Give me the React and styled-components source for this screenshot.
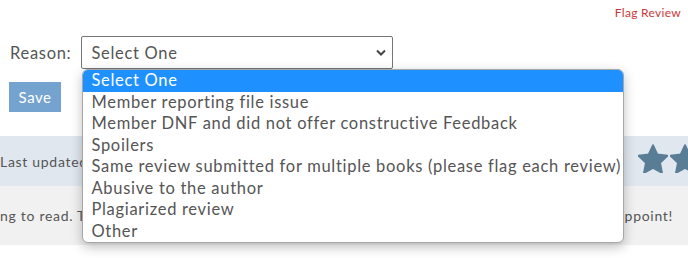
import React from "react";
import styled, { createGlobalStyle } from "styled-components";

const Global = createGlobalStyle`
  html, body { margin: 0; padding: 0; background: #fff; }
  body { font-family: "Lato", "Open Sans", sans-serif; color: #555; overflow: hidden; letter-spacing: 0.7px; }
`;

const Page = styled.div`
  width: 688px;
  height: 258px;
  position: relative;
  overflow: hidden;
`;

const FlagRow = styled.div`
  display: flex;
  justify-content: flex-end;
  padding: 5px 7px 0 0;
  height: 15px;
`;

const FlagLink = styled.a`
  font-size: 12px;
  letter-spacing: 0.3px;
  color: #c8383a;
  text-decoration: none;
`;

const Form = styled.div`
  padding: 16px 9px 0 9px;
  display: flex;
  flex-direction: column;
  gap: 13px;
`;

const FieldRow = styled.div`
  display: flex;
  align-items: center;
  gap: 10px;
`;

const Label = styled.label`
  font-size: 16.5px;
  color: #555;
  padding-left: 1px;
`;

const SelectWrap = styled.div`
  position: relative;
`;

const SelectBox = styled.div`
  height: 31px;
  border: 1px solid #767676;
  border-radius: 2px;
  display: flex;
  align-items: center;
  justify-content: space-between;
  padding: 0 6px 0 9px;
  box-sizing: content-box;
  width: 295px;
  font-size: 16.5px;
  color: #555;
  background: #fff;
`;

const Popup = styled.ul`
  position: absolute;
  left: 1px;
  top: 33px;
  width: 540px;
  margin: 0;
  padding: 0;
  list-style: none;
  background: #fff;
  border: 1px solid #a7a7a7;
  border-radius: 6px;
  box-shadow: 0 4px 12px rgba(0, 0, 0, 0.25);
  overflow: hidden;
  z-index: 5;
`;

const Option = styled.li`
  height: 21.5px;
  line-height: 21.5px;
  padding-left: 8px;
  font-size: 16.5px;
  white-space: nowrap;
  color: ${(p) => (p.$active ? "#fff" : "#555")};
  background: ${(p) => (p.$active ? "#1e90ff" : "transparent")};
`;

const SaveButton = styled.button`
  width: 52px;
  height: 30px;
  border: none;
  background: #74a3cf;
  color: #fff;
  font-family: inherit;
  letter-spacing: 0.5px;
  font-size: 15px;
  padding: 0;
  align-self: flex-start;
`;

const InfoBand = styled.div`
  margin-top: 24px;
  height: 50px;
  background: #e1e7ef;
  display: flex;
  align-items: center;
  justify-content: space-between;
  overflow: hidden;
`;

const MetaText = styled.span`
  font-size: 14px;
  color: #555;
  white-space: nowrap;
`;

const Stars = styled.div`
  display: flex;
  gap: 2px;
  margin-right: -12px;
  padding-bottom: 6px;
`;

const BodyBand = styled.div`
  height: 59px;
  background: #f1f1f1;
  display: flex;
  align-items: center;
  justify-content: space-between;
  padding-right: 15px;
  font-size: 14px;
  color: #555;
  white-space: nowrap;
  overflow: hidden;
`;

const Chevron = () => (
  <svg width="10" height="7" viewBox="0 0 10 7">
    <path d="M1 1.5 L5 5.5 L9 1.5" fill="none" stroke="#444" strokeWidth="2" />
  </svg>
);

const Star = () => (
  <svg width="30" height="29" viewBox="2.2 1.8 19.6 18.8">
    <path
      d="M12 2.5l2.9 6.1 6.6.8-4.9 4.6 1.3 6.6L12 17.3l-5.9 3.3 1.3-6.6-4.9-4.6 6.6-.8z"
      fill="#5a7d96"
      stroke="#5a7d96"
      strokeWidth="1.2"
      strokeLinejoin="round"
    />
  </svg>
);

const options = [
  "Select One",
  "Member reporting file issue",
  "Member DNF and did not offer constructive Feedback",
  "Spoilers",
  "Same review submitted for multiple books (please flag each review)",
  "Abusive to the author",
  "Plagiarized review",
  "Other",
];

export default function App() {
  return (
    <Page>
      <Global />
      <FlagRow>
        <FlagLink href="#">Flag Review</FlagLink>
      </FlagRow>
      <Form>
        <FieldRow>
          <Label>Reason:</Label>
          <SelectWrap>
            <SelectBox>
              <span>Select One</span>
              <Chevron />
            </SelectBox>
            <Popup>
              {options.map((o, i) => (
                <Option key={o} $active={i === 0}>
                  {o}
                </Option>
              ))}
            </Popup>
          </SelectWrap>
        </FieldRow>
        <SaveButton>Save</SaveButton>
      </Form>
      <InfoBand>
        <MetaText>Last updated: March 12, 2024</MetaText>
        <Stars>
          <Star />
          <Star />
        </Stars>
      </InfoBand>
      <BodyBand>
        <span>ng to read. The characters were well written and</span>
        <span>the ending did not disappoint!</span>
      </BodyBand>
    </Page>
  );
}
